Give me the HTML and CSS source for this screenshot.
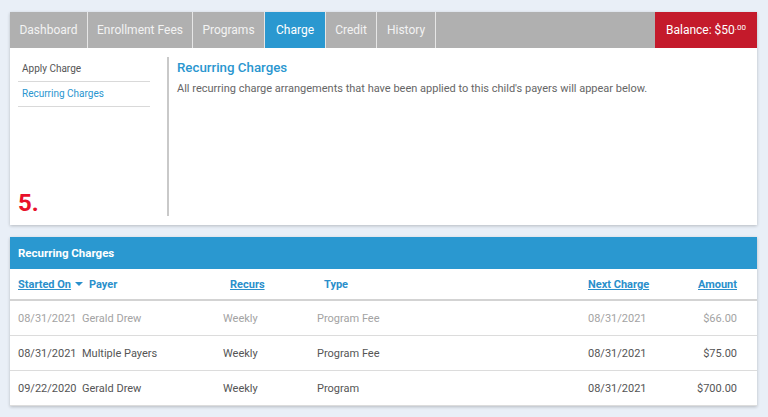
FILE: index.html
```html
<!DOCTYPE html>
<html>
<head>
<meta charset="utf-8">
<link rel="stylesheet" href="styles.css">
</head>
<body>
<div class="page">
  <div class="card top-card">
    <div class="tabs">
      <div class="tab w-dash">Dashboard</div>
      <div class="tab w-enr">Enrollment Fees</div>
      <div class="tab w-prog">Programs</div>
      <div class="tab active w-charge">Charge</div>
      <div class="tab w-credit">Credit</div>
      <div class="tab w-hist">History</div>
      <div class="tab filler"></div>
      <div class="balance">Balance: $50<sup>.00</sup></div>
    </div>
    <div class="panel">
      <div class="sidebar">
        <div class="side-item">Apply Charge</div>
        <div class="side-item current">Recurring Charges</div>
        <div class="step">5.</div>
      </div>
      <div class="content">
        <h2 class="content-title">Recurring Charges</h2>
        <p class="content-desc">All recurring charge arrangements that have been applied to this child's payers will appear below.</p>
      </div>
    </div>
  </div>

  <div class="card table-card">
    <div class="table-head">Recurring Charges</div>
    <div class="row header">
      <div class="c1"><span class="link">Started On</span><span class="caret"></span></div>
      <div class="c2 hpad">Payer</div>
      <div class="c3 hpad"><span class="link">Recurs</span></div>
      <div class="c4 hpad">Type</div>
      <div class="c5"><span class="link">Next Charge</span></div>
      <div class="c6 right"><span class="link">Amount</span></div>
    </div>
    <div class="row data muted">
      <div class="c1">08/31/2021</div>
      <div class="c2">Gerald Drew</div>
      <div class="c3">Weekly</div>
      <div class="c4">Program Fee</div>
      <div class="c5">08/31/2021</div>
      <div class="c6 right">$66.00</div>
    </div>
    <div class="row data">
      <div class="c1">08/31/2021</div>
      <div class="c2">Multiple Payers</div>
      <div class="c3">Weekly</div>
      <div class="c4">Program Fee</div>
      <div class="c5">08/31/2021</div>
      <div class="c6 right">$75.00</div>
    </div>
    <div class="row data">
      <div class="c1">09/22/2020</div>
      <div class="c2">Gerald Drew</div>
      <div class="c3">Weekly</div>
      <div class="c4">Program</div>
      <div class="c5">08/31/2021</div>
      <div class="c6 right">$700.00</div>
    </div>
  </div>
</div>
</body>
</html>
```
FILE: styles.css
```css
html, body {
  margin: 0;
  padding: 0;
}
body {
  background: #e9eff7;
  font-family: Roboto, "Liberation Sans", sans-serif;
  color: #555;
  width: 768px;
  height: 417px;
  overflow: hidden;
}
.page {
  padding: 12px 11px 0 10px;
  display: flex;
  flex-direction: column;
  gap: 12px;
}
.card {
  background: #fff;
  box-shadow: 0 1px 3px rgba(0,0,0,0.22);
}
.tabs {
  display: flex;
  height: 36px;
  background: #b0b0b0;
}
.tab {
  box-sizing: border-box;
  height: 36px;
  line-height: 36px;
  color: #f3f3f3;
  font-size: 12px;
  text-align: center;
  border-right: 1px solid #e6e6e6;
}
.w-dash { width: 78px; }
.w-enr { width: 105px; }
.w-prog { width: 72px; }
.w-charge { width: 61px; }
.w-credit { width: 51px; }
.w-hist { width: 59px; }
.tab.filler { flex: 1; border-right: none; }
.tab.active {
  background: #2a98d0;
  color: #fff;
}
.balance {
  width: 102px;
  height: 36px;
  line-height: 36px;
  background: #c41a2b;
  color: #fff;
  font-size: 12px;
  text-align: center;
}
.balance sup {
  font-size: 8px;
  vertical-align: 4px;
  line-height: 0;
}
.panel {
  display: flex;
  padding: 9px 0 9px 8px;
  height: 159px;
}
.sidebar {
  width: 132px;
  display: flex;
  flex-direction: column;
  margin-right: 17px;
}
.side-item {
  font-size: 10px;
  height: 25px;
  line-height: 24px;
  padding-left: 4px;
  box-sizing: border-box;
  border-bottom: 1px solid #d9d9d9;
  color: #555;
}
.side-item.current {
  color: #2a96cf;
}
.step {
  margin-top: auto;
  color: #e8102a;
  font-weight: 700;
  font-size: 24px;
  line-height: 26px;
  padding-bottom: 0;
}
.content {
  border-left: 2px solid #c9c9c9;
  padding: 2px 0 0 8px;
  flex: 1;
}
.content-title {
  margin: 0;
  font-size: 13.3px;
  font-weight: 500;
  line-height: 18px;
  color: #2a96cf;
}
.content-desc {
  margin: 4px 0 0;
  font-size: 11px;
  line-height: 16px;
  color: #666;
}
.table-head {
  height: 32px;
  line-height: 32px;
  background: #2a98d0;
  color: #fff;
  font-size: 11.5px;
  font-weight: 700;
  padding-left: 8px;
}
.row {
  display: grid;
  grid-template-columns: 64px 141px 94px 271px 1fr 80px;
  padding: 0 20px 0 8px;
  font-size: 11px;
  align-items: center;
  white-space: nowrap;
}
.row.header {
  height: 30px;
  border-bottom: 2px solid #d3d3d3;
  color: #2a8fcb;
  font-weight: 700;
}
.hpad { padding-left: 7px; }
.link { text-decoration: underline; }
.caret {
  display: inline-block;
  width: 0;
  height: 0;
  border-left: 4px solid transparent;
  border-right: 4px solid transparent;
  border-top: 4px solid #2a8fcb;
  margin-left: 4px;
  vertical-align: 2px;
}
.row.data {
  height: 35px;
  box-sizing: border-box;
  border-bottom: 1px solid #dcdcdc;
  color: #555;
}
.row.data.muted { color: #a3a3a3; }
.right { text-align: right; }
```
